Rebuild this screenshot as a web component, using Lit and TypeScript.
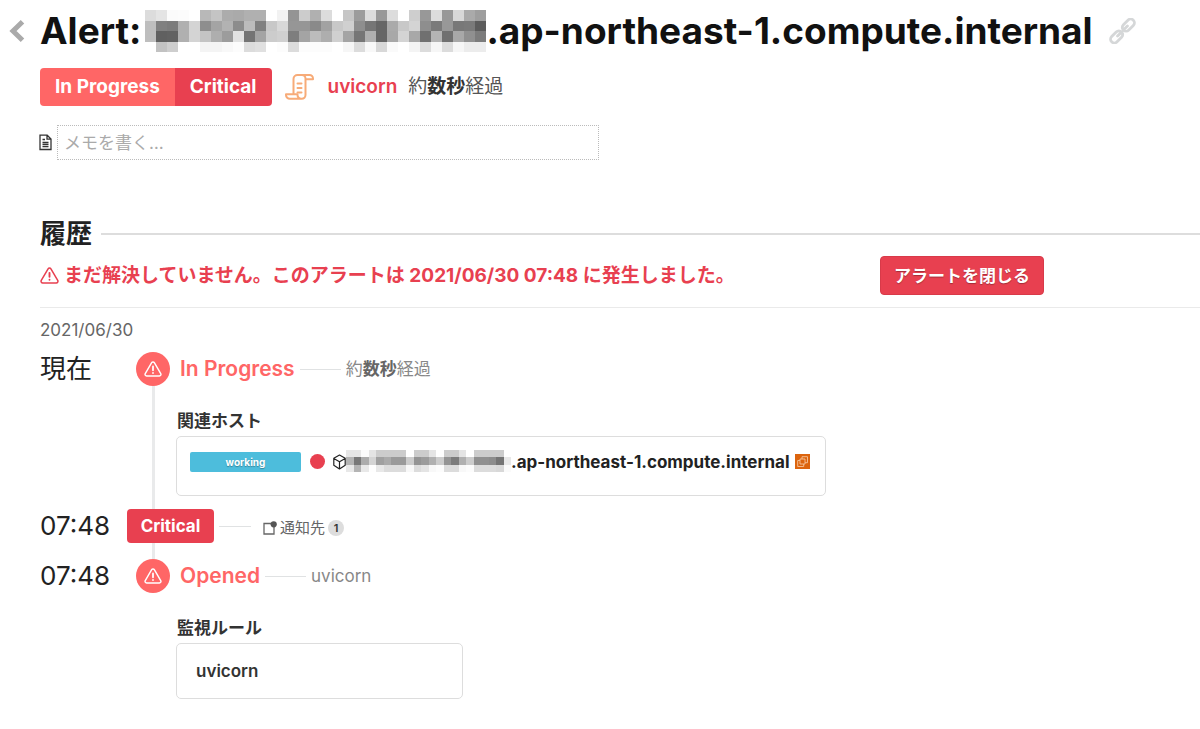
import { LitElement, html, css, svg } from "lit";
import { customElement, property } from "lit/decorators.js";

/* Redacted part of a host name: each row is a list of two-digit grey levels. */
const TITLE_MASK = [
  "dce4fbfcffb8c4acaab0b0fff294ccb0dcffc69cdc98dcffce98dc98d8aa9e",
  "be807cb0d48ea4b28cbc80c8d896968aa2c8d08e7666aac8d48e7a98787a5c",
  "be6062b0d4c4ae9ce274a4ccd07ea4bcaed0a476b066a8d4a870b470a8907c",
  "ffc2cefffff4f4f8fcdce0fffcdcfcfcfcfff6dcf8d8fafff4dcf6dcf6ecec",
];
const HOST_MASK = [
  "e6e6fbe4ccccccccffcccce4fecccce4ffccccccccff",
  "b478acd4a0aa9a9acc949cb0cc947cb0cc90908c74e8",
  "e8b4e8fee8dcdcdcf8dce4f8fcdcdcf8fcdcdcdcd8fa",
];

@customElement("pixel-mask")
class PixelMask extends LitElement {
  @property({ attribute: false }) rows: string[] = [];
  static styles = css`
    :host { display: block; flex: none; }
    svg { display: block; width: 100%; height: 100%; }
  `;
  render() {
    const cols = this.rows.length ? this.rows[0].length / 2 : 0;
    return html`<svg viewBox="0 0 ${cols} ${this.rows.length}" preserveAspectRatio="none" shape-rendering="crispEdges" aria-hidden="true">
      ${this.rows.map((row, y) =>
        (row.match(/../g) ?? []).map((g, x) => svg`<rect x=${x} y=${y} width="1" height="1" fill=${"#" + g + g + g}></rect>`)
      )}
    </svg>`;
  }
}

const warning = html`<svg class="warn" viewBox="0 0 20 18" fill="none" stroke="currentColor" stroke-linecap="round" stroke-linejoin="round" aria-hidden="true">
  <path stroke-width="1.6" d="M8.5 1.9 1.3 14.2a1.8 1.8 0 0 0 1.5 2.7h14.4a1.8 1.8 0 0 0 1.5-2.7L11.5 1.9a1.75 1.75 0 0 0-3 0Z"></path>
  <path stroke-width="2" d="M10 6.2v4.2M10 13.4v.1"></path>
</svg>`;

@customElement("app-root")
class AppRoot extends LitElement {
  static styles = css`
    :host {
      display: block;
      background: #fff;
      color: #222;
      font-family: Inter, "Noto Sans CJK JP", sans-serif;
      font-size: 17px;
      line-height: 24px;
    }
    * { box-sizing: border-box; }
    h1, h2, h3, p, ol { margin: 0; padding: 0; }
    ol { list-style: none; }
    a { color: inherit; text-decoration: none; }
    svg { display: block; flex: none; }

    .title { display: flex; align-items: center; height: 62px; padding-left: 9px; }
    .back { width: 31px; }
    .title h1 { display: flex; align-items: center; font-size: 37px; line-height: 44px; font-weight: 700; color: #111; white-space: nowrap; }
    .title pixel-mask { width: 341px; height: 42px; margin-left: 4px; }
    .permalink { margin-left: 16px; }

    .summary { display: flex; align-items: center; height: 38px; margin: 6px 0 0 40px; }
    .badges { display: flex; border-radius: 4px; overflow: hidden; color: #fff; font-size: 19px; font-weight: 700; line-height: 38px; }
    .badges span { padding: 0 15px; }
    .progress { background: #ff6666; }
    .critical { background: #e84050; }
    .summary svg { margin: 0 14px 0 13px; }
    .monitor { color: #e84050; font-size: 19px; font-weight: 600; }
    .elapsed { color: #555; font-size: 19px; margin-left: 11px; }
    .elapsed b { color: #333; }

    .memo { display: flex; align-items: center; gap: 5px; margin: 19px 0 0 39px; }
    .memo input {
      width: 542px; height: 35px; padding: 0 6px; border: 1px dotted #bbb; background: none;
      font: inherit; color: #333; border-radius: 0;
    }
    .memo input::placeholder { color: #aaa; opacity: 1; }

    .history { margin: 58px 0 0 40px; }
    .history h2 { display: flex; align-items: center; gap: 9px; font-size: 26px; line-height: 32px; font-weight: 700; }
    .history h2::after { content: ""; flex: 1; height: 2px; background: #ddd; }
    .bar { display: flex; align-items: center; height: 58px; padding-bottom: 6px; border-bottom: 1px solid #eaeaea; color: #e84050; }
    .bar p { display: flex; align-items: center; gap: 5px; width: 840px; font-size: 19px; font-weight: 700; white-space: nowrap; }
    .bar .warn { width: 19px; height: 17px; }
    .bar button {
      height: 39px; padding: 0 13px; border: 1px solid #d83a49; border-radius: 4px; background: #e84050; color: #fff;
      font: inherit; font-weight: 700; text-shadow: 0 1px 1px rgba(0, 0, 0, 0.3); white-space: nowrap;
    }

    .date { margin-top: 10px; color: #666; }
    .timeline { position: relative; display: grid; gap: 16px; margin-top: 10px; }
    .timeline::before { content: ""; position: absolute; left: 112px; top: 17px; bottom: 120px; width: 3px; background: #e9eaeb; }
    .event { position: relative; display: grid; grid-template-columns: 87px 1fr; }
    time { font-size: 26px; line-height: 34px; }
    .head { display: flex; align-items: center; height: 34px; }
    .dot { display: grid; place-items: center; width: 34px; height: 34px; margin: 0 10px 0 9px; border-radius: 50%; background: #ff6666; color: #fff; }
    .dot .warn { width: 18px; height: 16px; margin-bottom: 1px; }
    .state { color: #ff6666; font-size: 21px; font-weight: 600; }
    .head .pill { width: 87px; border-radius: 4px; background: #e84050; color: #fff; font-weight: 700; line-height: 34px; text-align: center; }
    .rule { width: 41px; height: 1px; margin: 0 5px; background: #e0e2e3; }
    .rule.short { width: 32px; margin: 0 12px 0 5px; }
    .detail { color: #888; }
    .detail b { color: #666; }
    .targets { display: flex; align-items: center; gap: 3px; color: #666; font-size: 15px; padding-top: 4px; }
    .count { width: 16px; height: 16px; border-radius: 50%; background: #ddd; color: #333; font-size: 11px; font-weight: 600; line-height: 16px; text-align: center; }

    .body { padding-left: 49px; }
    h3 { margin-top: 22px; padding-left: 1px; font-size: 17px; line-height: 26px; font-weight: 700; color: #333; }
    .card { border: 1px solid #ddd; border-radius: 5px; margin-top: 2px; }
    .host { display: flex; align-items: flex-start; max-width: 650px; height: 60px; padding: 13px; margin-bottom: -3px; }
    .working { width: 111px; height: 20px; margin-top: 2px; border-radius: 2px; background: #4dbddc; color: #fff; font-size: 10px; font-weight: 700; line-height: 20px; text-align: center; text-shadow: 0 1px 1px rgba(0, 0, 0, 0.3); }
    .alert-dot { width: 15px; height: 15px; margin: 4px 8px 0 9px; border-radius: 50%; background: #e84050; }
    .host > svg { margin-top: 4px; }
    .host a { display: flex; font-weight: 700; white-space: nowrap; }
    .host pixel-mask { width: 165px; height: 22px; }
    .host .cloud { margin-left: 5px; }
    .monitor-card { max-width: 287px; padding: 15px 19px; font-weight: 600; color: #333; }
  `;

  render() {
    return html`
      <header>
        <div class="title">
          <a class="back" href="#" aria-label="戻る">
            <svg width="16" height="22" viewBox="0 0 16 22" fill="none" stroke="#aaa" stroke-width="5"><path d="M13.5 1.8 4 11l9.5 9.2"></path></svg>
          </a>
          <h1>Alert:<pixel-mask .rows=${TITLE_MASK}></pixel-mask>.ap-northeast-1.compute.internal</h1>
          <a class="permalink" href="#" aria-label="リンク">
            <svg width="27" height="26" viewBox="0 0 27 26" fill="none" stroke="#d5d7d8" stroke-width="2.8" stroke-linecap="round">
              <g transform="rotate(-45 13.5 13)"><path d="M6.500 13h5.700a3.800 3.800 0 0 0-3.800-3.800H2a3.800 3.800 0 0 0 0 7.600h6.400a3.800 3.800 0 0 0 3.400-2.200M20.500 13h-5.700a3.800 3.800 0 0 0 3.800 3.800H25a3.800 3.800 0 0 0 0-7.600h-6.400a3.800 3.800 0 0 0-3.400 2.200"></path></g>
            </svg>
          </a>
        </div>
        <div class="summary">
          <div class="badges"><span class="progress">In Progress</span><span class="critical">Critical</span></div>
          <svg width="29" height="26" viewBox="0 0 29 26" fill="none" stroke="#f7ab78" stroke-width="2" stroke-linejoin="round" stroke-linecap="round" aria-hidden="true">
            <path d="M8.500 19V5a4 4 0 0 1 4-4h12a3.500 3.500 0 0 1 3.500 3.500v.8h-7.500V21a3.800 3.800 0 0 1-3.800 3.800H5A3.800 3.800 0 0 1 1 21v-.8h11.500V21a3.800 3.800 0 0 0 4 3.800M20.500 5.300V4.500A3.500 3.500 0 0 0 17 1"></path>
            <path d="M12.500 9.500h4M12.500 14h4M12.500 18.500h4"></path>
          </svg>
          <a class="monitor" href="#">uvicorn</a>
          <span class="elapsed">約<b>数秒</b>経過</span>
        </div>
        <div class="memo">
          <label for="memo" aria-label="メモ">
            <svg width="13" height="17" viewBox="0 0 13 17" fill="none" stroke="#333" stroke-width="1.300"><path d="M1 1.200h7.200L12 5v10.500H1ZM8 1.500V5.200h3.700M3.500 5.500h2.500M3.500 8.500h6M3.500 10.500h6M3.500 12.700h6"></path></svg>
          </label>
          <input id="memo" type="text" placeholder="メモを書く…" />
        </div>
      </header>

      <section class="history">
        <h2>履歴</h2>
        <div class="bar">
          <p>${warning}<span>まだ解決していません。このアラートは 2021/06/30 07:48 に発生しました。</span></p>
          <button type="button">アラートを閉じる</button>
        </div>
        <p class="date">2021/06/30</p>
        <ol class="timeline">
          <li class="event">
            <time>現在</time>
            <div>
              <div class="head">
                <span class="dot">${warning}</span><span class="state">In Progress</span><span class="rule"></span>
                <span class="detail">約<b>数秒</b>経過</span>
              </div>
              <div class="body">
                <h3>関連ホスト</h3>
                <div class="card host">
                  <span class="working">working</span>
                  <span class="alert-dot"></span>
                  <svg width="13" height="16" viewBox="0 0 13 16" fill="none" stroke="#222" stroke-width="1.200" stroke-linejoin="round" aria-hidden="true"><path d="m6.500 1 5.700 3.300v7L6.500 15 .8 11.300v-7ZM.8 4.500l5.700 3.300 5.700-3.300M6.500 7.800V15"></path></svg>
                  <a href="#"><pixel-mask .rows=${HOST_MASK}></pixel-mask>.ap-northeast-1.compute.internal</a>
                  <svg class="cloud" width="15" height="15" viewBox="0 0 15 15" aria-hidden="true"><rect width="15" height="15" fill="#dc640e"></rect><path d="M5 5h5v5H5ZM5 6.500H2.700v6h6V10M7 5V2.700h5.500v6H10" fill="none" stroke="#f5c39b" stroke-width=".9"></path></svg>
                </div>
              </div>
            </div>
          </li>
          <li class="event">
            <time>07:48</time>
            <div class="head">
              <span class="pill">Critical</span><span class="rule short"></span>
              <span class="targets">
                <svg width="14" height="14" viewBox="0 0 14 14" aria-hidden="true"><path d="M8 2.500H1V13h10V6" fill="none" stroke="#666" stroke-width="1.300"></path><circle cx="10.700" cy="3.300" r="3.100" fill="#555"></circle></svg>
                通知先 <span class="count">1</span>
              </span>
            </div>
          </li>
          <li class="event">
            <time>07:48</time>
            <div>
              <div class="head">
                <span class="dot">${warning}</span><span class="state">Opened</span><span class="rule"></span>
                <span class="detail">uvicorn</span>
              </div>
              <div class="body">
                <h3>監視ルール</h3>
                <div class="card monitor-card"><a href="#">uvicorn</a></div>
              </div>
            </div>
          </li>
        </ol>
      </section>
    `;
  }
}
